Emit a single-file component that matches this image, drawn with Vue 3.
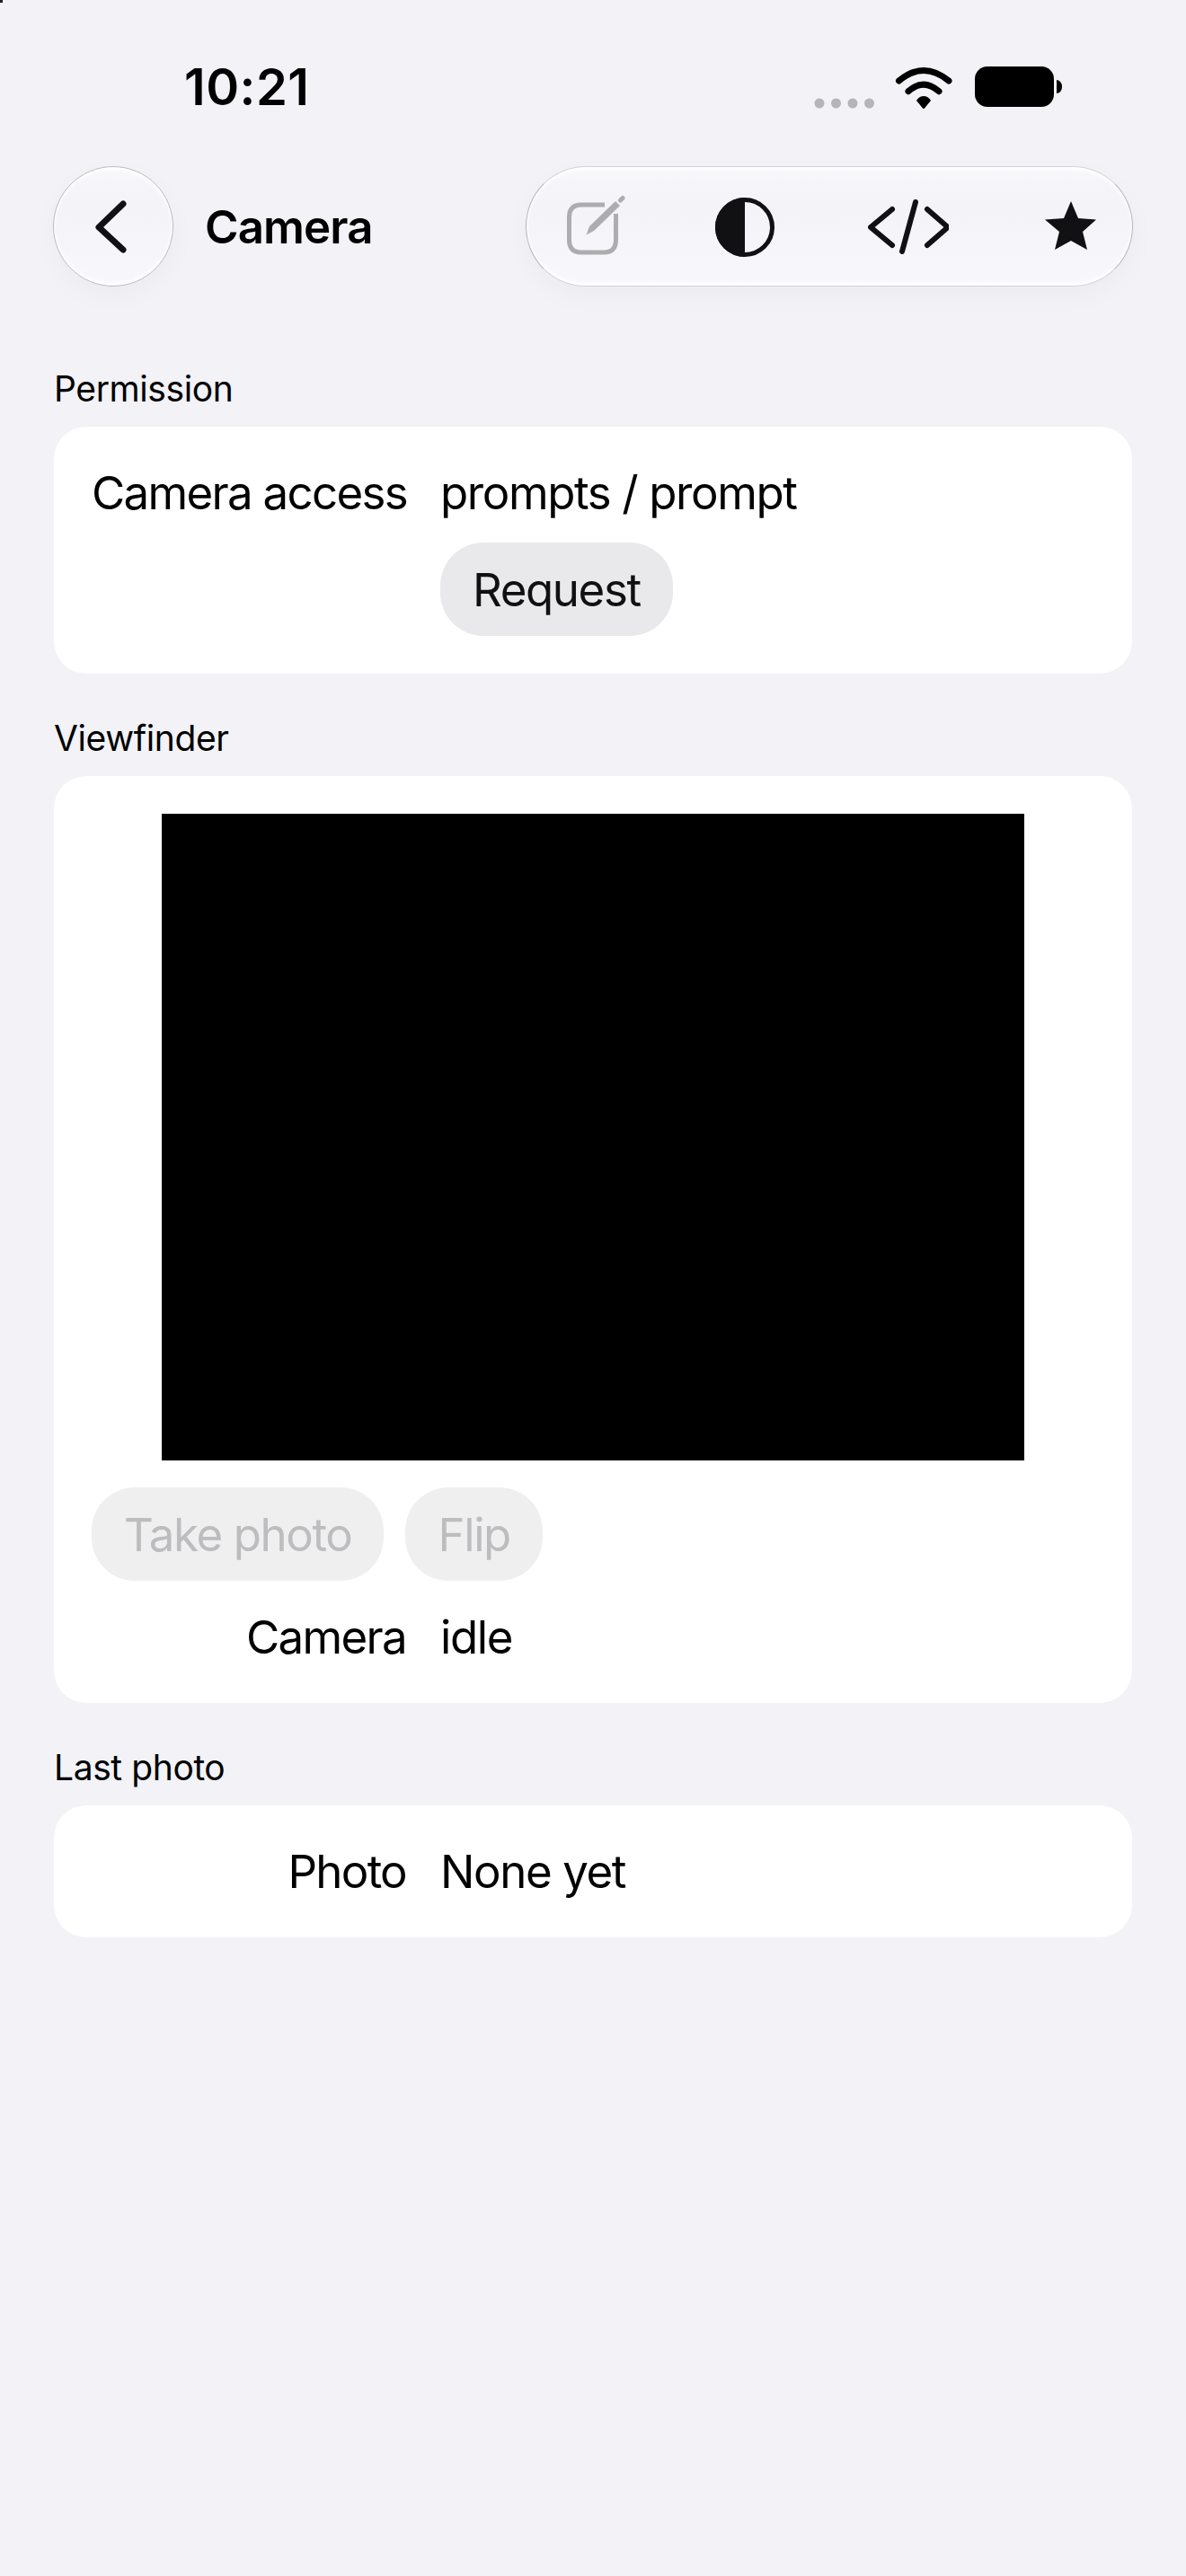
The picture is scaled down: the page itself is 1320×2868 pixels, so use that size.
<script setup>
const sections = {
  permission: { label: "Camera access", value: "prompts / prompt" },
  camera: { label: "Camera", value: "idle" },
  photo: { label: "Photo", value: "None yet" },
};
</script>

<template>
  <div class="page">
    <div class="corner"></div>

    <div class="status-bar">
      <span class="time">10:21</span>
      <svg class="status-icons" viewBox="905 70 280 60" width="280" height="60">
        <circle cx="912" cy="115" r="5.5" fill="#b5b4ba" />
        <circle cx="930.5" cy="115" r="5.5" fill="#b5b4ba" />
        <circle cx="949" cy="115" r="5.5" fill="#b5b4ba" />
        <circle cx="967.5" cy="115" r="5.5" fill="#b5b4ba" />
        <path d="M1000.5 90Q1028 67 1056 90M1011 101.7Q1028 86.5 1045 101.7" fill="none" stroke="#000" stroke-width="7" stroke-linecap="round" />
        <path d="M1028 107Q1033 107 1036 112L1029 120.5Q1028 121.5 1027 120.5L1020 112Q1023 107 1028 107Z" fill="#000" />
        <rect x="1085" y="74" width="88" height="45" rx="14" fill="#000" />
        <path d="M1176 89Q1182 90 1182 96.5Q1182 103 1176 104Z" fill="#000" />
      </svg>
    </div>

    <header class="header">
      <button class="glass back">
        <svg viewBox="100 220 44 66" width="44" height="66">
          <path d="M135 227L108 253L135 278" fill="none" stroke="#111113" stroke-width="7" stroke-linecap="round" stroke-linejoin="round" />
        </svg>
      </button>
      <h1 class="title">Camera</h1>
      <div class="glass toolbar">
        <svg class="icon-edit" viewBox="629 216 66 70" width="66" height="70">
          <path d="M672 228H646Q632.5 228 632.5 242V267Q632.5 281 646 281H671Q684.5 281 684.5 267V238" fill="none" stroke="#adadaf" stroke-width="5" />
          <path d="M651.5 261.5L655 252L684 224L689 229L660 257Z" fill="#adadaf" />
          <path d="M689.5 223L692 220.5" stroke="#adadaf" stroke-width="5" stroke-linecap="round" />
        </svg>
        <svg class="icon-contrast" viewBox="795 220 66 66" width="66" height="66">
          <circle cx="828" cy="253" r="30.5" fill="none" stroke="#111113" stroke-width="5" />
          <path d="M828 220A33 33 0 0 0 828 286Z" fill="#111113" />
        </svg>
        <svg class="icon-code" viewBox="965 220 90 66" width="90" height="66">
          <path d="M992 233L968 253L992 273M1031 233L1054 253L1031 273M1018 225L1003 280" fill="none" stroke="#111113" stroke-width="6" stroke-linecap="round" stroke-linejoin="round" />
        </svg>
        <svg class="icon-star" viewBox="1161 220 60 66" width="60" height="66">
          <path d="M1191 224L1199 243L1219 244.5L1204 258L1209 278L1191 268L1173 278L1178 258L1162 244.5L1183 243Z" fill="#111113" />
        </svg>
      </div>
    </header>

    <main class="content">
      <section class="section">
        <h2 class="section-title">Permission</h2>
        <div class="card grid">
          <span class="label">{{ sections.permission.label }}</span>
          <span class="value">{{ sections.permission.value }}</span>
          <button class="btn request">Request</button>
        </div>
      </section>

      <section class="section">
        <h2 class="section-title">Viewfinder</h2>
        <div class="card viewfinder">
          <div class="video"></div>
          <div class="actions">
            <button class="btn" disabled>Take photo</button>
            <button class="btn" disabled>Flip</button>
          </div>
          <div class="grid">
            <span class="label">{{ sections.camera.label }}</span>
            <span class="value">{{ sections.camera.value }}</span>
          </div>
        </div>
      </section>

      <section class="section">
        <h2 class="section-title">Last photo</h2>
        <div class="card grid">
          <span class="label">{{ sections.photo.label }}</span>
          <span class="value">{{ sections.photo.value }}</span>
        </div>
      </section>
    </main>
  </div>
</template>

<style>
html,
body {
  margin: 0;
  background: #f2f2f7;
}
</style>

<style scoped>
.page {
  position: relative;
  box-sizing: border-box;
  width: 1320px;
  height: 2868px;
  background: #f2f2f7;
  color: #000;
  font-family: Inter, "Liberation Sans", sans-serif;
}

.corner {
  position: absolute;
  top: 0;
  left: 0;
  width: 3px;
  height: 3px;
  background: #222;
}

.status-bar {
  display: flex;
  justify-content: space-between;
  align-items: flex-start;
  box-sizing: border-box;
  height: 185px;
  padding: 0 135px 0 205px;
}

.time {
  margin-top: 65px;
  font-size: 56px;
  line-height: 64px;
  font-weight: 600;
  letter-spacing: 0.5px;
}

.status-icons {
  margin-top: 70px;
}

.header {
  display: flex;
  align-items: center;
  height: 134px;
  padding: 0 59px;
}

.glass {
  box-sizing: border-box;
  height: 134px;
  padding-top: 2px;
  border: 1.5px solid;
  border-color: #d4d4d8 #b6b6ba;
  background: linear-gradient(#f8f8fb, #f3f3f8 35%, #f8f8fc);
  box-shadow:
    inset 0 3px 4px #fff,
    inset 0 -3px 4px #fff,
    0 10px 30px rgba(0, 0, 0, 0.03);
}

.back {
  display: flex;
  align-items: center;
  justify-content: center;
  width: 134px;
  padding-right: 4px;
  padding-left: 0;
  padding-bottom: 0;
  border-color: #bdbdc1;
  border-radius: 50%;
}

.title {
  margin: 0 0 0 35px;
  font-size: 51px;
  font-weight: 600;
  letter-spacing: -0.9px;
}

.toolbar {
  display: flex;
  align-items: center;
  margin-left: auto;
  width: 676px;
  padding-left: 44px;
  border-radius: 67px;
}

.icon-edit {
  margin-top: -4px;
}

.icon-contrast {
  margin-left: 100px;
}

.icon-code {
  margin-left: 104px;
}

.icon-star {
  margin-left: 106px;
}

.content {
  padding: 90px 60px 0;
}

.section {
  margin-bottom: 48px;
}

.section-title {
  margin: 0 0 18px;
  font-size: 39px;
  line-height: 48px;
  font-weight: 400;
  letter-spacing: -0.4px;
}

.card {
  box-sizing: border-box;
  padding: 42px;
  border-radius: 36px;
  background: #fff;
}

.grid {
  display: grid;
  grid-template-columns: 350px 1fr;
  column-gap: 38px;
  row-gap: 24px;
  font-size: 51px;
  line-height: 63px;
  letter-spacing: -1.4px;
}

.label {
  text-align: right;
  white-space: nowrap;
  letter-spacing: -1.7px;
}

.request {
  grid-column: 2;
  justify-self: start;
  padding: 0 37px;
}

.btn {
  height: 104px;
  padding: 0 36px;
  border: 0;
  border-radius: 48px;
  background: #e9e9eb;
  color: #111113;
  font-family: inherit;
  font-size: 51px;
  letter-spacing: -1.4px;
}

.btn:disabled {
  background: #efeff0;
  color: #bdbdc0;
}

.viewfinder {
  display: flex;
  flex-direction: column;
  gap: 30px;
}

.video {
  align-self: center;
  width: 960px;
  height: 720px;
  background: #000;
}

.actions {
  display: flex;
  gap: 24px;
  margin-bottom: 1px;
}
</style>
